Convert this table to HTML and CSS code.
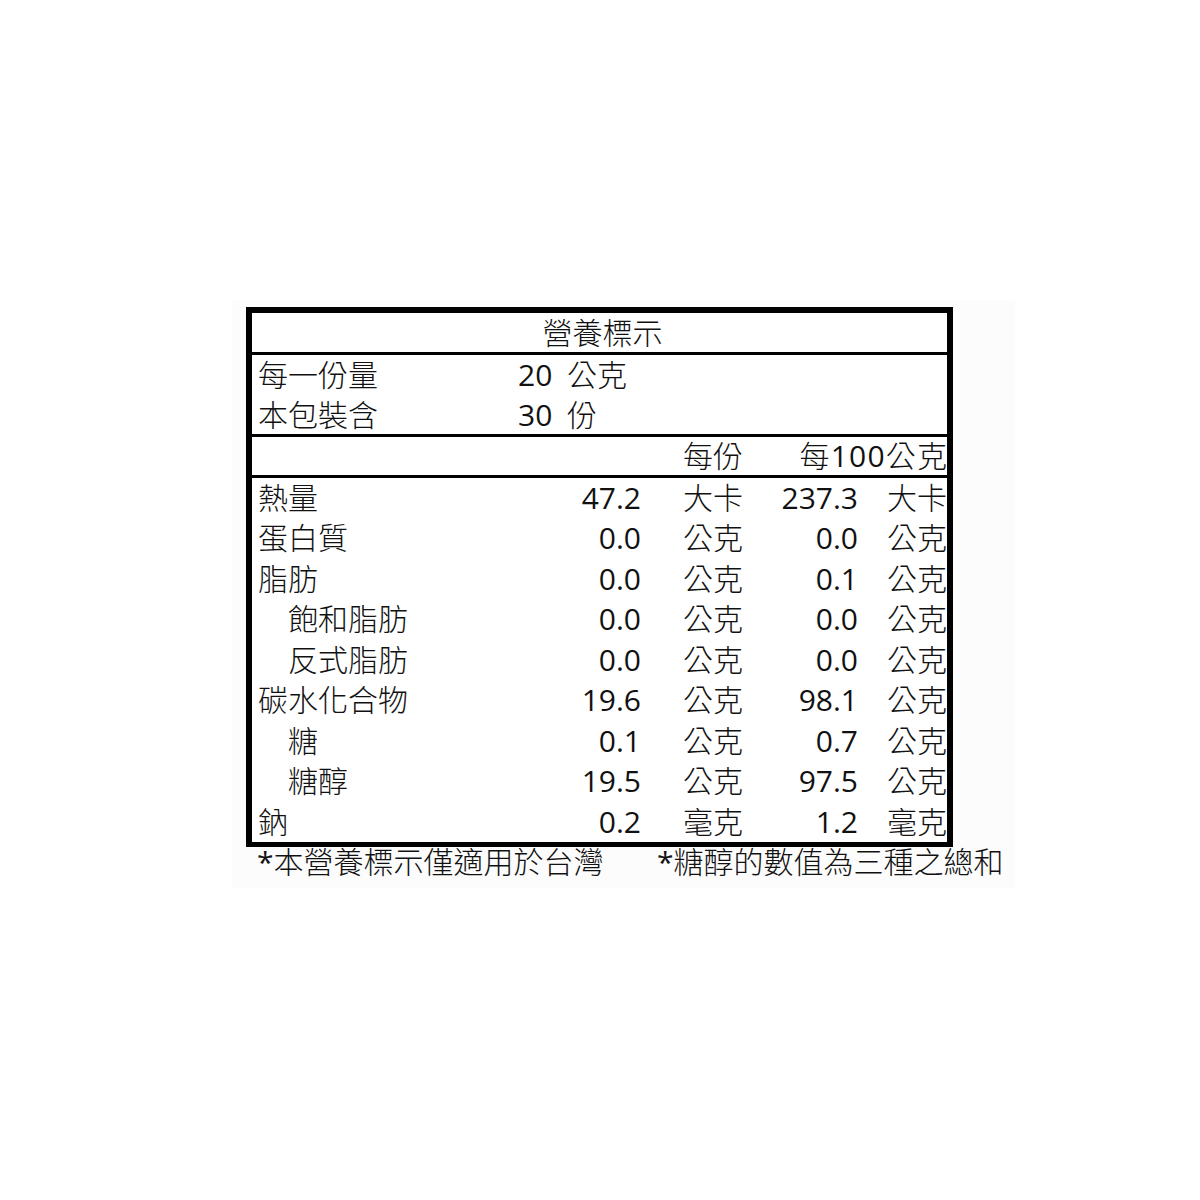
FILE: index.html
```html
<!DOCTYPE html>
<html lang="zh-Hant">
<head>
<meta charset="utf-8">
<title>營養標示</title>
<link rel="stylesheet" href="styles.css">
</head>
<body>
<div class="sheet">
  <div class="label">
    <div class="title">營養標示</div>
    <div class="serving">
      <div class="srow"><span class="sname">每一份量</span><span class="sval"><span class="n">20</span> 公克</span></div>
      <div class="srow"><span class="sname">本包裝含</span><span class="sval"><span class="n">30</span> 份</span></div>
    </div>
    <div class="head">
      <span class="h1">每份</span>
      <span class="h2">每<span class="n">100</span>公克</span>
    </div>
    <div class="data">
      <span class="name">熱量</span><span class="v">47.2</span><span class="u">大卡</span><span class="v">237.3</span><span class="u2">大卡</span>
      <span class="name">蛋白質</span><span class="v">0.0</span><span class="u">公克</span><span class="v">0.0</span><span class="u2">公克</span>
      <span class="name">脂肪</span><span class="v">0.0</span><span class="u">公克</span><span class="v">0.1</span><span class="u2">公克</span>
      <span class="name sub">飽和脂肪</span><span class="v">0.0</span><span class="u">公克</span><span class="v">0.0</span><span class="u2">公克</span>
      <span class="name sub">反式脂肪</span><span class="v">0.0</span><span class="u">公克</span><span class="v">0.0</span><span class="u2">公克</span>
      <span class="name">碳水化合物</span><span class="v">19.6</span><span class="u">公克</span><span class="v">98.1</span><span class="u2">公克</span>
      <span class="name sub">糖</span><span class="v">0.1</span><span class="u">公克</span><span class="v">0.7</span><span class="u2">公克</span>
      <span class="name sub">糖醇</span><span class="v">19.5</span><span class="u">公克</span><span class="v">97.5</span><span class="u2">公克</span>
      <span class="name">鈉</span><span class="v">0.2</span><span class="u">毫克</span><span class="v">1.2</span><span class="u2">毫克</span>
    </div>
  </div>
  <div class="notes">
    <span class="note1"><span class="n">*</span>本營養標示僅適用於台灣</span>
    <span class="note2"><span class="n">*</span>糖醇的數值為三種之總和</span>
  </div>
</div>
</body>
</html>
```

FILE: styles.css
```css
html, body {
  margin: 0;
  padding: 0;
  background: #ffffff;
}

body {
  font-family: "Open Sans", "Noto Sans CJK TC", sans-serif;
  font-size: 30px;
  font-weight: 300;
  color: #111111;
}

.n,
.v {
  font-weight: 400;
}

.sheet {
  margin: 300px 0 0 232px;
  width: 783px;
  box-sizing: border-box;
  padding: 7px 62px 7px 14px;
  background: #fcfcfc;
}

.label {
  width: 707px;
  box-sizing: border-box;
  border-style: solid;
  border-color: #000;
  border-width: 6px 6px 5px 6px;
  background: #ffffff;
}

.title {
  height: 39px;
  line-height: 39px;
  text-align: center;
  padding-left: 6px;
  border-bottom: 3px solid #000;
}

.serving {
  height: 79px;
  border-bottom: 3px solid #000;
  display: flex;
  flex-direction: column;
  padding-left: 6px;
}

.srow {
  height: 39.5px;
  line-height: 39.5px;
  display: grid;
  grid-template-columns: 260px auto;
}

.sval {
  word-spacing: 7px;
}

.head {
  height: 38px;
  line-height: 38px;
  border-bottom: 3px solid #000;
  display: grid;
  grid-template-columns: 431px 60px 1fr;
}

.head .h1 {
  grid-column: 2;
}

.head .h2 {
  grid-column: 3;
  text-align: right;
  letter-spacing: 1.2px;
  margin-right: -1.2px;
}

.data {
  display: grid;
  padding-left: 6px;
  grid-template-columns: 303px 80px 102px 115px 89px;
  grid-auto-rows: 40.44px;
  line-height: 40.44px;
}

.name {
  white-space: nowrap;
}

.name.sub {
  padding-left: 30px;
}

.v {
  text-align: right;
}

.u {
  padding-left: 42px;
  white-space: nowrap;
}

.u2 {
  padding-left: 29px;
  white-space: nowrap;
}

.notes {
  display: grid;
  grid-template-columns: 400px auto;
  padding-left: 11px;
  height: 34px;
  line-height: 30px;
  white-space: nowrap;
}
```
